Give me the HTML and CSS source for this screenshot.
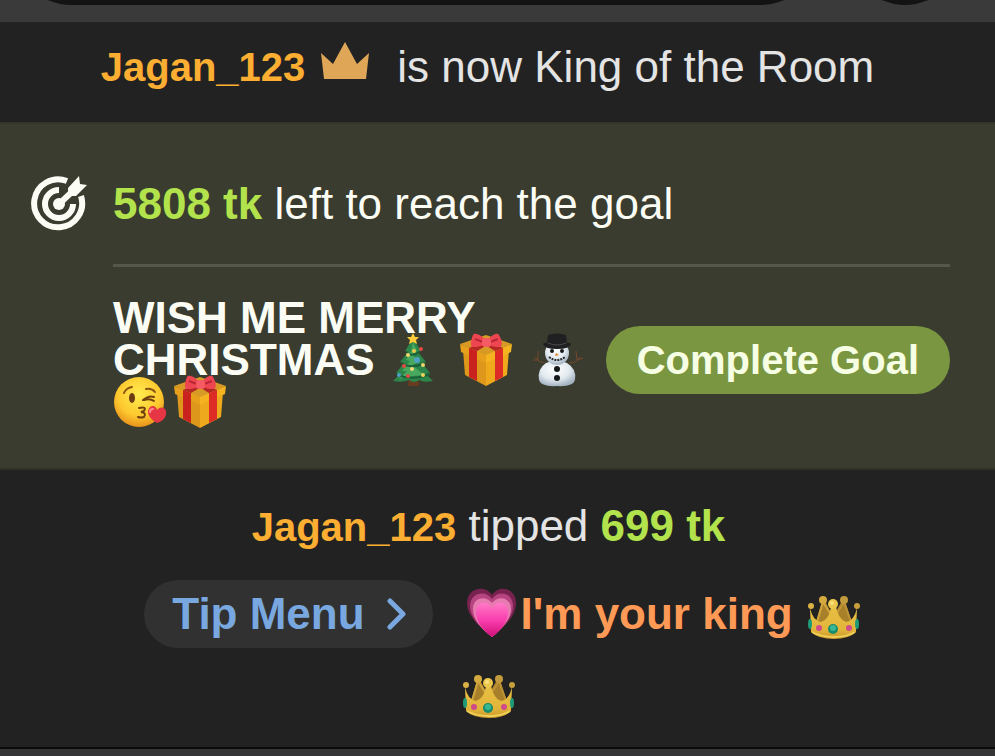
FILE: index.html
```html
<!DOCTYPE html>
<html lang="en">
    <head>
        <meta charset="UTF-8">
        <meta name="viewport" content="width=device-width, initial-scale=1">
        <title>Room Chat</title>
        <link rel="stylesheet" href="styles.css">
    </head>
    <body>
        <!-- shared drawings -->
        <svg class="defs" width="0" height="0" aria-hidden="true">
            <defs>
                <linearGradient id="gold" x1="0" y1="0" x2="0" y2="1">
                    <stop offset="0" stop-color="#e8c044"/>
                    <stop offset=".7" stop-color="#e2b53a"/>
                    <stop offset="1" stop-color="#c9972b"/>
                </linearGradient>
                <radialGradient id="face" cx=".5" cy=".35" r=".65">
                    <stop offset="0" stop-color="#ffec4f"/>
                    <stop offset=".65" stop-color="#fdc92f"/>
                    <stop offset="1" stop-color="#e8921b"/>
                </radialGradient>
                <radialGradient id="snow" cx=".45" cy=".35" r=".65">
                    <stop offset="0" stop-color="#ffffff"/>
                    <stop offset=".6" stop-color="#e3eaf0"/>
                    <stop offset="1" stop-color="#a4b4c2"/>
                </radialGradient>
                <linearGradient id="pink" x1="0" y1="0" x2="0" y2="1">
                    <stop offset="0" stop-color="#ff79c6"/>
                    <stop offset=".5" stop-color="#f93fae"/>
                    <stop offset="1" stop-color="#cf0f78"/>
                </linearGradient>
            </defs>

            <symbol id="gift" viewBox="0 0 54 54">
                <path d="M4 17 27 26V53L6 42Z" fill="#dd971b"/>
                <path d="M50 17 27 26V53L48 42Z" fill="#efa91c"/>
                <path d="M1 11 27 2 53 11 27 23Z" fill="#d79a25"/>
                <path d="M1 11 27 22V30L2 19Z" fill="#e6a01c"/>
                <path d="M53 11 27 22V30L52 19Z" fill="#f5b320"/>
                <path d="M10 15 18 18V48L10 44Z" fill="#ca231f"/>
                <path d="M44 15 36 18V48L44 44Z" fill="#dd2c25"/>
                <path d="M10 15 31 5 37 7 18 18Z M44 15 24 5 18 7 36 18Z" fill="#b42723"/>
                <path d="M27 8C22 1 15-1 14 2C12 7 11 12 13 14C17 14 24 14 27 9Z" fill="#ee4650"/>
                <path d="M28 8C33 1 39-1 40 2C43 7 44 12 41 14C37 14 31 14 28 9Z" fill="#ee4650"/>
                <path d="M16 6 24 9M39 6 31 9" stroke="#ba2636" stroke-width="2" fill="none"/>
                <rect x="23" y="5" width="9" height="9" rx="3" fill="#f45b62"/>
            </symbol>

            <symbol id="crown" viewBox="0 0 54 54">
                <path d="M8 38 15 14H18L26 29 35 14H38L46 38Z" fill="#a9802a"/>
                <path d="M10 35 16 15 26 31" fill="none" stroke="#cfa43c" stroke-width="2"/>
                <path d="M44 35 37 15 27 31" fill="none" stroke="#bd9234" stroke-width="2"/>
                <circle cx="16" cy="13" r="4" fill="#d4a93e"/>
                <circle cx="37" cy="13" r="4" fill="#c29b3c"/>
                <path d="M3 21Q6 34 14 35Q22 33 24 20H29Q32 33 39 35Q47 34 50 21L49 45Q42 52 27 52Q11 52 4 45Z" fill="url(#gold)"/>
                <path d="M5 45Q14 50 27 50Q40 50 48 45" fill="none" stroke="#efcf57" stroke-width="2"/>
                <circle cx="4" cy="19" r="3" fill="#dbb145"/>
                <circle cx="50" cy="19" r="3" fill="#c79f3c"/>
                <circle cx="26" cy="17" r="5" fill="#edc74c"/>
                <circle cx="25" cy="16" r="2" fill="#f8df7c"/>
                <ellipse cx="3" cy="37" rx="2" ry="5" fill="#1f9a78"/>
                <ellipse cx="50" cy="37" rx="2" ry="5" fill="#1f9a78"/>
                <circle cx="12" cy="41" r="3" fill="#cf4a89"/>
                <circle cx="42" cy="41" r="3" fill="#cf4a89"/>
                <circle cx="26" cy="42" r="5" fill="#168c6c"/>
                <circle cx="26" cy="41" r="3" fill="#37b892"/>
            </symbol>
        </svg>

        <header class="top-bar">
            <div class="address"></div>
            <div class="round"></div>
        </header>

        <main>
            <p class="notice">
                <span class="user">Jagan_123</span>
                <svg class="king-icon" viewBox="0 0 48 38" aria-hidden="true"><path d="M0 11 12 22 24 0 36 22 48 11 45 37H3Z" fill="#dfa657"/></svg>
                <span>is now King of the Room</span>
            </p>

            <section class="goal">
                <svg class="goal-icon" viewBox="0 0 56 56" aria-hidden="true">
                    <g fill="none" stroke="#fbfdf5" stroke-width="6">
                        <path d="M36 5A24 24 0 1 0 50 20"/>
                        <path d="M28 14A14 14 0 1 0 42 28"/>
                    </g>
                    <circle cx="28" cy="28" r="6" fill="#fbfdf5"/>
                    <path d="M28 28 43 14" stroke="#fbfdf5" stroke-width="6"/>
                    <path d="M37 20V12L48 0 49 8 56 9 45 20Z" fill="#fbfdf5"/>
                </svg>
                <p class="goal-left"><b class="tokens">5808 tk</b> left to reach the goal</p>
                <div class="goal-body">
                    <h2>
                        WISH ME MERRY CHRISTMAS
                        <svg class="emoji" viewBox="0 0 54 54" role="img" aria-label="Christmas tree">
                            <path d="M22 43H31L32 53H21Z" fill="#693b21"/>
                            <path d="M26 5 34 18 31 19 39 29 35 30 43 40 39 41 46 48Q36 50 32 47Q27 51 22 47Q15 50 6 48L13 41 9 40 17 30 13 29 21 19 18 18Z" fill="#2c8549"/>
                            <path d="M26 9 30 18 25 21 32 29 25 32 37 42 26 43 12 46 20 38 15 38 23 28 19 27 24 19Z" fill="#48a85e"/>
                            <path d="M19 20Q26 24 32 19M15 31Q26 36 38 30M10 42Q26 48 43 41" stroke="#1b6239" stroke-width="2" fill="none"/>
                            <path d="M26 0 28 4 32 4 29 7 30 11 26 9 22 11 23 7 20 4 24 4Z" fill="#ffcb3a"/>
                            <circle cx="34" cy="16" r="2" fill="#e24b43"/>
                            <circle cx="27" cy="18" r="2" fill="#e8c94d"/>
                            <circle cx="21" cy="22" r="2" fill="#f0d56a"/>
                            <circle cx="30" cy="27" r="3" fill="#4f9fc6"/>
                            <circle cx="17" cy="33" r="2" fill="#e24b43"/>
                            <circle cx="25" cy="36" r="2" fill="#f0d97a"/>
                            <circle cx="36" cy="32" r="2" fill="#f0d56a"/>
                            <circle cx="12" cy="42" r="2" fill="#4f9fc6"/>
                            <circle cx="21" cy="43" r="2" fill="#e24b43"/>
                            <circle cx="36" cy="42" r="2" fill="#f1d35a"/>
                        </svg>
                        <svg class="emoji" role="img" aria-label="Gift"><use href="#gift"/></svg>
                        <svg class="emoji" viewBox="0 0 54 54" role="img" aria-label="Snowman">
                            <path d="M14 30Q8 30 4 24M7 27 2 27M7 27 7 18M38 30Q46 30 49 24M46 27 52 25M46 27 45 18" fill="none" stroke="#77492d" stroke-width="1"/>
                            <path d="M15 30Q26 25 36 30Q46 36 44 47Q42 54 26 53Q10 54 8 47Q6 36 15 30Z" fill="url(#snow)"/>
                            <circle cx="26" cy="20" r="12" fill="url(#snow)"/>
                            <path d="M17 2Q26-1 35 2L36 10Q39 9 40 11Q39 16 26 16Q13 16 12 11Q13 9 16 10Z" fill="#202023"/>
                            <path d="M17 10Q26 14 35 10" stroke="#4b4b4f" stroke-width="1" fill="none"/>
                            <circle cx="21" cy="18" r="2" fill="#18191b"/>
                            <circle cx="31" cy="18" r="2" fill="#18191b"/>
                            <path d="M25 20 28 22 24 23Z" fill="#e0822f"/>
                            <path d="M18 24Q26 30 34 24" stroke="#25272a" stroke-width="2" stroke-dasharray="2 1" fill="none"/>
                            <circle cx="26" cy="36" r="3" fill="#161719"/>
                            <circle cx="26" cy="45" r="3" fill="#161719"/>
                        </svg>
                        <svg class="emoji" viewBox="0 0 54 54" role="img" aria-label="Face blowing a kiss">
                            <circle cx="26" cy="27" r="25" fill="url(#face)"/>
                            <path d="M11 18Q13 13 19 12M33 14Q39 13 42 17" fill="none" stroke="#8c5513" stroke-width="2" stroke-linecap="round"/>
                            <ellipse cx="19" cy="23" rx="3" ry="5" fill="#6b3d13"/>
                            <path d="M30 25Q36 20 41 22M31 25Q37 23 41 26" fill="none" stroke="#70400f" stroke-width="2" stroke-linecap="round"/>
                            <path d="M26 33Q34 31 31 36L28 37Q34 38 31 42Q28 43 25 42" fill="none" stroke="#70400f" stroke-width="2" stroke-linecap="round"/>
                            <path d="M44 48C35 43 33 36 37 32C41 29 44 33 44 35C47 31 52 32 53 36C54 42 50 46 44 48Z" fill="#e63545"/>
                            <path d="M37 37Q37 34 40 34" fill="none" stroke="#ff8790" stroke-width="2" stroke-linecap="round"/>
                        </svg><svg class="emoji" role="img" aria-label="Gift"><use href="#gift"/></svg>
                    </h2>
                    <button class="complete" type="button">Complete Goal</button>
                </div>
            </section>

            <section class="tip">
                <p><span class="user">Jagan_123</span> tipped <b class="tokens">699 tk</b></p>
                <div class="tip-row">
                    <button class="tip-menu" type="button">
                        Tip Menu
                        <svg class="arrow" viewBox="0 0 20 32" aria-hidden="true"><path d="M3 3 16 16 3 29" fill="none" stroke="#78a8df" stroke-width="5" stroke-linecap="round" stroke-linejoin="round"/></svg>
                    </button>
                    <svg class="emoji" viewBox="0 0 54 54" role="img" aria-label="Growing heart">
                        <path d="M27 50C12 38 2 28 2 16C2 1 20-3 27 8C34-3 51 1 51 16C51 28 42 38 27 50Z" fill="#78224f"/>
                        <path d="M27 50C13 38 5 29 5 19C5 6 20 2 27 12C34 2 48 6 48 19C48 29 40 38 27 50Z" fill="#b64480"/>
                        <path d="M27 50C14 40 8 31 8 22C8 10 21 8 27 16C33 8 46 10 46 22C46 31 39 40 27 50Z" fill="#e77bb1"/>
                        <path d="M27 50C16 42 11 33 11 25C11 14 22 13 27 21C32 13 43 14 43 25C43 33 38 42 27 50Z" fill="url(#pink)"/>
                    </svg>
                    <b class="tip-text">I'm your king</b>
                    <svg class="emoji" role="img" aria-label="Crown"><use href="#crown"/></svg>
                </div>
                <div class="tip-row last">
                    <svg class="emoji" role="img" aria-label="Crown"><use href="#crown"/></svg>
                </div>
            </section>
        </main>
    </body>
</html>
```

FILE: styles.css
```css
* {
    box-sizing: border-box;
}

body {
    margin: 0;
    background: #353537;
    color: #e4e4e4;
    font-family: "Liberation Sans", Arial, sans-serif;
    font-size: 44px;
    line-height: 50px;
}

p,
h2 {
    margin: 0;
}

button {
    border: none;
    border-radius: 34px;
    height: 68px;
    font-family: inherit;
    font-weight: bold;
    white-space: nowrap;
    cursor: pointer;
}

.defs {
    position: absolute;
}

/* browser bar, only its lower edge is in view */
.top-bar {
    height: 22px;
    padding: 0 35px 17px 16px;
    display: flex;
    align-items: flex-end;
    gap: 34px;
    overflow: hidden;
    background: #3a3a3a;
}

.address {
    flex: 1;
    height: 110px;
    border-radius: 55px;
    background: #131313;
}

.round {
    width: 110px;
    height: 110px;
    border-radius: 50%;
    background: #131313;
}

main {
    background: #222222;
    border-bottom: 2px solid #0c0c0c;
}

.user {
    color: #fbae31;
    font-size: 40px;
    font-weight: bold;
}

.tokens {
    color: #b3e34c;
}

.notice {
    display: flex;
    justify-content: center;
    padding: 20px 20px 30px 0;
}

.king-icon {
    width: 48px;
    height: 38px;
    margin: 0 28px 0 16px;
}

.goal {
    display: grid;
    grid-template-columns: 56px 1fr;
    column-gap: 26px;
    padding: 52px 45px 45px 31px;
    background: #393c2e;
    border-top: 2px solid #34362c;
    border-bottom: 2px solid #303229;
    color: #fbfdf5;
}

.goal-icon {
    width: 56px;
    height: 56px;
}

.goal-left {
    line-height: 56px;
}

.goal-body {
    grid-column: 2;
    display: flex;
    align-items: center;
    margin-top: 32px;
    padding-top: 30px;
    border-top: 3px solid #54574a;
}

.goal-body h2 {
    flex: 1;
    font-size: 44px;
    line-height: 42px;
}

.emoji {
    width: 54px;
    height: 54px;
    flex: none;
}

/* pictures overlap the tight title lines */
.goal-body .emoji {
    margin: -10px 6px -10px 0;
    vertical-align: -2px;
}

.complete {
    padding: 0 31px;
    font-size: 40px;
    background: #7a9640;
    color: #f6ffe4;
}

.tip {
    padding: 31px 18px 27px 0;
    text-align: center;
}

.tip-row {
    display: flex;
    align-items: center;
    justify-content: center;
    margin-top: 28px;
}

.tip-row.last {
    margin-top: 18px;
}

.tip-menu {
    display: flex;
    align-items: center;
    gap: 22px;
    margin: 0 32px 0 28px;
    padding: 0 26px 0 28px;
    font-size: 44px;
    background: #313131;
    color: #78a8df;
}

.arrow {
    width: 20px;
    height: 32px;
}

.tip-text {
    margin: 0 14px 0 2px;
    color: #ff9a56;
}
```
